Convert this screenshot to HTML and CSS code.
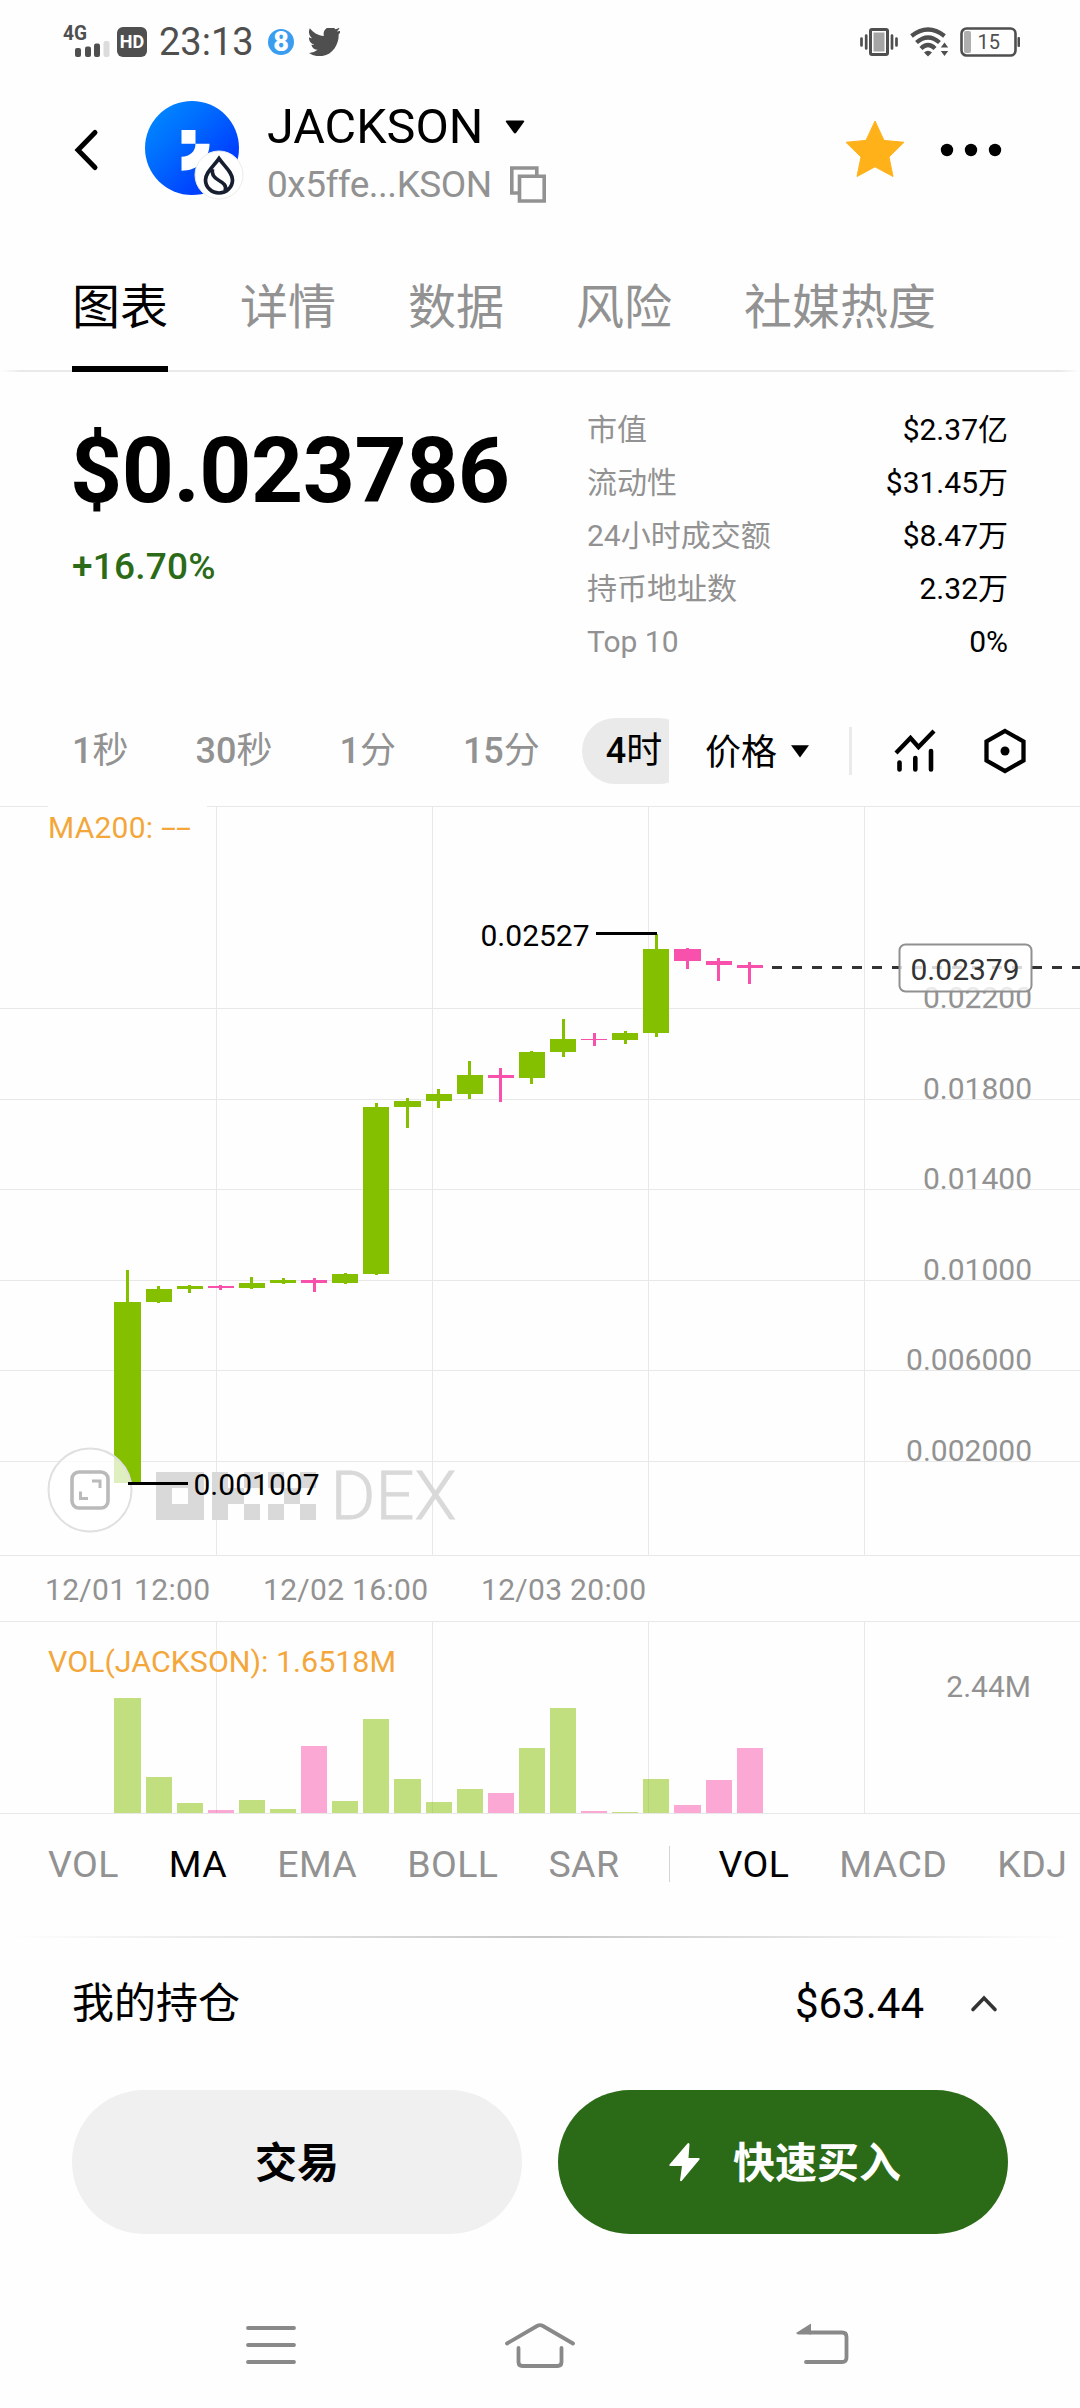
FILE: index.html
```html
<!DOCTYPE html>
<html lang="zh-CN">
<head>
<meta charset="utf-8">
<title>JACKSON</title>
<link rel="stylesheet" href="styles.css">
</head>
<body>
<div class="screen">
  <div class="status">
    <div class="status-side">
      <svg class="signal" width="50" height="36" viewBox="0 -2 50 36">
        <text class="signal-label" x="0" y="16" textLength="24" lengthAdjust="spacingAndGlyphs">4G</text>
        <g fill="#4f4f4f"><rect x="12" y="24" width="6" height="9" rx="2"/><rect x="22" y="22.500" width="6" height="10.500" rx="2"/><rect x="31" y="19.500" width="6" height="13.500" rx="2"/></g>
        <rect x="40.500" y="17" width="6" height="16" rx="2" fill="#dcdcdc"/>
      </svg>
      <span class="hd">HD</span>
      <span class="clock">23:13</span>
      <span class="eight">8</span>
      <svg class="bird" width="31" height="28" viewBox="1 3 22.500 18.600" preserveAspectRatio="none"><path fill="#4f4f4f" d="M23.950 4.570a10 10 0 0 1-2.820.770 4.960 4.960 0 0 0 2.160-2.720c-.950.550-2 .950-3.130 1.180a4.920 4.920 0 0 0-8.380 4.480C7.690 8.090 4.070 6.130 1.640 3.160a4.820 4.820 0 0 0-.670 2.480c0 1.710.870 3.210 2.190 4.100a4.900 4.900 0 0 1-2.230-.620v.060a4.920 4.920 0 0 0 3.950 4.830 5 5 0 0 1-2.210.080 4.940 4.940 0 0 0 4.600 3.420A9.870 9.870 0 0 1 1 19.540a13.990 13.990 0 0 0 7.550 2.210c9.050 0 14-7.500 14-13.980 0-.210 0-.420-.020-.630a9.940 9.940 0 0 0 2.460-2.550z"/></svg>
    </div>
    <div class="status-side">
      <svg class="vibrate" width="38" height="30" viewBox="0 0 38 30"><rect x="10.500" y="2.500" width="17" height="25" rx="1.500" fill="none" stroke="#4f4f4f" stroke-width="3"/><rect x="13.500" y="5.500" width="11" height="19" fill="#a5a5a5"/><path d="M1.500 11.500v7M6.200 8.500v13M32 8.500v13M36.500 11.500v7" stroke="#4f4f4f" stroke-width="2.700" stroke-linecap="round"/></svg>
      <svg class="wifi" width="40" height="30" viewBox="0 0 40 30"><g fill="none" stroke="#4f4f4f" stroke-width="4.300"><path d="M1.500 9Q18 -4 34.500 9"/><path d="M6.500 15.500Q18 5.500 29.500 15.500"/><path d="M11 21.500Q18 14.500 25 21.500"/></g><path d="M14 25.500Q18 22 22 25.500L18 29.500zM34.500 15.500l3.700 5h-7.400zM34.500 29l3.700-5h-7.400z" fill="#4f4f4f"/></svg>
      <svg class="battery" width="60" height="30" viewBox="0 0 60 30"><rect x="1.500" y="1.500" width="54" height="27" rx="5" fill="none" stroke="#4f4f4f" stroke-width="2.600"/><rect x="4" y="4" width="7" height="22" rx="2" fill="#afafaf"/><rect x="57.500" y="10" width="2.500" height="10" rx="1" fill="#4f4f4f"/><text class="battery-label" x="28.800" y="22" text-anchor="middle">15</text></svg>
    </div>
  </div>

  <header class="header">
    <svg class="back" width="26" height="44" viewBox="0 0 26 44"><path d="M22 4.500L5 22l17 17.500" fill="none" stroke="#000" stroke-width="5" stroke-linecap="round"/></svg>
    <svg class="avatar" width="100" height="104" viewBox="0 0 100 104">
      <defs><linearGradient id="coin" x1="0" y1="0" x2="1" y2="1"><stop offset="0" stop-color="#0090ff"/><stop offset=".35" stop-color="#006fff"/><stop offset=".75" stop-color="#0040ff"/><stop offset="1" stop-color="#0030ff"/></linearGradient></defs>
      <circle cx="48" cy="50" r="47" fill="url(#coin)"/>
      <path d="M37.500 32h14v13.700h14c0 16-12 27-28 27v-14c8.500 0 14-5.500 14-13h-14z" fill="#fff"/>
      <circle cx="75" cy="77" r="24" fill="#fff" stroke="#ececec"/>
      <path d="M75 60.500C70 68 61.500 74 61.500 82a13.500 13 0 0 0 27 0C88.500 74 80 68 75 60.500zM68.500 71c-1.500 6 2 9 6.500 11.500s8 5 6 10.500" fill="none" stroke="#161e30" stroke-width="3.700"/>
    </svg>
    <div class="token">
      <div class="token-name">JACKSON<svg width="20" height="14" viewBox="0 0 20 14"><path d="M2 .5h16q2 0 .8 1.800l-7.600 10.500q-1.200 1.400-2.400 0L1.200 2.300Q0 .5 2 .5z"/></svg></div>
      <div class="token-address"><span>0x5ffe...KSON</span><svg width="36" height="37" viewBox="0 0 36 37"><path d="M8 27H1.800V2h25v7M9.500 10.200H34.200V35H9.500z" fill="none" stroke="#929292" stroke-width="3.600"/></svg></div>
    </div>
    <svg class="star" width="60" height="60" viewBox="0 0 60 60"><path d="M30 3l9 19.400 20 1.900L44 39l4 19.500L30 48.800 12 58.500 16 39 1 24.300l20-1.900z" fill="#ffb11a" stroke="#ffb11a" stroke-linejoin="round"/></svg>
    <svg class="more" width="62" height="14" viewBox="0 0 62 14"><circle cx="7" cy="7" r="6.200"/><circle cx="31" cy="7" r="6.200"/><circle cx="55" cy="7" r="6.200"/></svg>
  </header>

  <nav class="tabs"><a class="tab active">图表</a><a class="tab">详情</a><a class="tab">数据</a><a class="tab">风险</a><a class="tab">社媒热度</a></nav>

  <section class="summary">
    <div class="quote"><div class="price">$0.023786</div><div class="change">+16.70%</div></div>
    <dl class="stats">
      <div><dt>市值</dt><dd>$2.37亿</dd></div>
      <div><dt>流动性</dt><dd>$31.45万</dd></div>
      <div><dt>24小时成交额</dt><dd>$8.47万</dd></div>
      <div><dt>持币地址数</dt><dd>2.32万</dd></div>
      <div><dt>Top 10</dt><dd>0%</dd></div>
    </dl>
  </section>

  <div class="toolbar">
    <div class="ranges"><span><b>1</b>秒</span><span><b>30</b>秒</span><span><b>1</b>分</span><span><b>15</b>分</span><span class="selected"><b>4</b>时</span></div>
    <div class="metric"><span>价格</span><svg width="18" height="13" viewBox="0 0 18 13"><path d="M0 .3h18L9 12.500z"/></svg></div>
    <i class="rule"></i>
    <svg class="tool-chart" width="42" height="46" viewBox="0 0 42 46"><path d="M2 25L16.500 10l8 9L40 3" fill="none" stroke="#000" stroke-width="4.300"/><path d="M5.500 34.500v7M21.300 30v11.500M37 23v18.500" stroke="#000" stroke-width="4.600" stroke-linecap="round"/></svg>
    <svg class="tool-hex" width="42" height="46" viewBox="0 0 42 46"><path d="M21 3l18.500 10.500v19L21 43 2.500 32.500v-19z" fill="none" stroke="#000" stroke-width="4.300"/><circle cx="21" cy="23" r="4.500"/></svg>
  </div>

  <svg class="chart" width="1080" height="1010" viewBox="0 806 1080 1010">
    <g class="grid">
      <path d="M0 806.500H48M207 806.500H1080M0 1008.500H1080M0 1099.500H1080M0 1189.500H1080M0 1280.500H1080M0 1370.500H1080M0 1461.500H1080M0 1555.500H1080M0 1621.500H1080M0 1813.500H1080"/>
      <path d="M216.500 806V1555M432.500 806V1555M648.500 806V1555M864.500 806V1555M216.500 1621V1813M432.500 1621V1813M648.500 1621V1813M864.500 1621V1813"/>
    </g>
    <g class="watermark">
      <path d="M156 1472h48v48h-48zM172 1488v16h16v-16z" fill-rule="evenodd"/>
      <path d="M212 1472h16v16h16v16h-16v16h-16zM244 1472h16v16h-16zM244 1504h16v16h-16z"/>
      <path d="M268 1472h16v16h-16zM300 1472h16v16h-16zM284 1488h16v16h-16zM268 1504h16v16h-16zM300 1504h16v16h-16z"/>
      <text x="330.500" y="1519" textLength="126" lengthAdjust="spacingAndGlyphs">DEX</text>
    </g>
    <g class="up">
      <path d="M114 1302h27v181h-27zM126 1270h3v32h-3z"/>
      <path d="M146 1289h26v13h-26zM157 1286h3v17h-3z"/>
      <path d="M177 1286h26v3h-26zM188 1285h3v8h-3z"/>
      <path d="M239 1283h26v5h-26zM250 1277h3v12h-3z"/>
      <path d="M270 1280h26v3h-26zM282 1278h3v6h-3z"/>
      <path d="M332 1274h26v9h-26zM344 1273h3v11h-3z"/>
      <path d="M363 1107h26v167h-26zM375 1103h3v172h-3z"/>
      <path d="M394 1101h27v6h-27zM406 1098h3v30h-3z"/>
      <path d="M426 1094h26v7h-26zM437 1089h3v19h-3z"/>
      <path d="M457 1075h26v19h-26zM468 1061h3v38h-3z"/>
      <path d="M519 1052h26v26h-26zM530 1051h3v33h-3z"/>
      <path d="M550 1039h26v13h-26zM562 1019h3v38h-3z"/>
      <path d="M612 1033h26v7h-26zM624 1031h3v13h-3z"/>
      <path d="M643 949h26v84h-26zM655 934h3v103h-3z"/>
    </g>
    <g class="down">
      <path d="M208 1286h26v2h-26zM219 1285h3v5h-3z"/>
      <path d="M301 1280h26v3h-26zM313 1278h3v14h-3z"/>
      <path d="M488 1075h26v3h-26zM499 1068h3v34h-3z"/>
      <path d="M581 1039h26v1h-26zM593 1033h3v13h-3z"/>
      <path d="M674 949h27v12h-27zM686 948h3v21h-3z"/>
      <path d="M706 961h26v4h-26zM717 958h3v23h-3z"/>
      <path d="M737 965h26v3h-26zM748 962h3v22h-3z"/>
    </g>
    <circle class="expand" cx="90" cy="1490" r="41.500"/>
    <rect class="expand-icon" x="72" y="1472" width="36" height="36" rx="7"/>
    <path class="expand-icon thin" d="M92 1481h8v7M88 1498.500h-7.500v-7"/>
    <path class="leader" d="M596 933.500h61M128 1483.500h60"/>
    <text class="note" x="480.500" y="946">0.02527</text>
    <text class="note" x="193.500" y="1495" textLength="126">0.001007</text>
    <g class="axis" text-anchor="end">
      <text x="1032" y="1008">0.02200</text><text x="1032" y="1099">0.01800</text><text x="1032" y="1189">0.01400</text><text x="1032" y="1280">0.01000</text><text x="1032" y="1370">0.006000</text><text x="1032" y="1461">0.002000</text>
      <text x="1031" y="1697">2.44M</text>
    </g>
    <path class="last" d="M772 967.500H1080"/>
    <rect class="last-box" x="899.500" y="944.500" width="132" height="47" rx="6"/>
    <text class="last-price" x="910.500" y="980">0.02379</text>
    <g class="axis"><text x="45" y="1600" textLength="165">12/01 12:00</text><text x="263" y="1600" textLength="165">12/02 16:00</text><text x="481" y="1600" textLength="165">12/03 20:00</text></g>
    <text class="legend" x="48" y="838" textLength="105">MA200:</text>
    <text class="legend" x="161" y="838" textLength="30" lengthAdjust="spacingAndGlyphs">--</text>
    <text class="legend" x="48" y="1672" textLength="348" lengthAdjust="spacingAndGlyphs">VOL(JACKSON): 1.6518M</text>
    <g class="volume up">
      <path d="M114 1698h27v115h-27zM146 1777h26v36h-26zM177 1803h26v10h-26zM239 1800h26v13h-26zM270 1809h26v4h-26zM332 1801h26v12h-26zM363 1719h26v94h-26zM394 1779h27v34h-27zM426 1802h26v11h-26zM457 1789h26v24h-26zM519 1748h26v65h-26zM550 1708h26v105h-26zM612 1812h26v1h-26zM643 1779h26v34h-26z"/>
    </g>
    <g class="volume down">
      <path d="M208 1810h26v3h-26zM301 1746h26v67h-26zM488 1793h26v20h-26zM581 1811h26v2h-26zM674 1805h27v8h-27zM706 1780h26v33h-26zM737 1748h26v65h-26z"/>
    </g>
  </svg>

  <div class="indicators"><span>VOL</span><span class="on">MA</span><span>EMA</span><span>BOLL</span><span>SAR</span><i></i><span class="on">VOL</span><span>MACD</span><span>KDJ</span></div>

  <div class="holding"><span class="holding-label">我的持仓</span><span class="holding-value">$63.44</span><svg width="28" height="20" viewBox="0 0 28 20"><path d="M3 16.500L14 5l11 11.500" fill="none" stroke="#333" stroke-width="3.600" stroke-linecap="round"/></svg></div>

  <div class="actions">
    <button class="btn trade">交易</button>
    <button class="btn buy"><svg width="31" height="39" viewBox="0 0 31 39"><path d="M18.500.5L.5 21.500q-.5 1.500 1 1.500H13l-2 14.500q1 1.500 2 0L30.500 16.500q.5-1.500-1-1.500H19.500L20.500 1q-1-1.500-2-.5z" fill="#fff"/></svg>快速买入</button>
  </div>

  <div class="sysnav">
    <svg width="52" height="46" viewBox="0 0 52 46"><path d="M3 5h46M3 22h46M3 39h46" stroke="#898989" stroke-width="3.800" stroke-linecap="round"/></svg>
    <svg class="home" width="72" height="46" viewBox="0 0 72 46"><path d="M3 20.500L33 3q3-1.600 6 0l30 17.500M14.500 25v14q0 4 4 4h35q4 0 4-4V25" fill="none" stroke="#898989" stroke-width="3.800" stroke-linecap="round"/></svg>
    <svg width="54" height="46" viewBox="0 0 54 46"><path d="M14 9.500h32q4.500 0 4.500 4.500v20.500q0 4.500-4.500 4.500H10" fill="none" stroke="#898989" stroke-width="3.800" stroke-linecap="round"/><path d="M0 10L15 .5v11H2z" fill="#898989"/></svg>
  </div>
</div>
</body>
</html>
```
FILE: styles.css
```css
* { box-sizing: border-box; }
body {
  margin: 0;
  background: #fefefe;
  color: #000;
  font-family: Roboto, "Noto Sans CJK SC", sans-serif;
}
.screen { width: 1080px; height: 2408px; display: flex; flex-direction: column; overflow: hidden; }
.screen > * { flex: none; }
svg { display: block; flex: none; }
text { font-family: Roboto, sans-serif; }

.status { height: 84px; padding: 0 60px 0 63px; display: flex; justify-content: space-between; align-items: center; color: #4f4f4f; }
.status-side { display: flex; align-items: center; }
.signal { margin-right: 4px; margin-top: -4px; overflow: visible; }
.signal-label { font-size: 21px; font-weight: 700; fill: #4f4f4f; }
.hd { width: 30px; height: 30px; border-radius: 6px; background: #4f4f4f; color: #fff; font-size: 18px; font-weight: 700; line-height: 30px; text-align: center; }
.clock { width: 94px; margin-left: 12px; font-size: 38px; line-height: 40px; white-space: nowrap; }
.eight { width: 26px; height: 26px; margin-left: 15px; border-radius: 50%; background: #3a9df0; color: #fff; font-size: 27px; font-weight: 900; line-height: 27px; text-align: center; }
.bird { margin-left: 15px; }
.wifi { margin-left: 12px; }
.battery { margin-left: 10px; }
.battery-label { font-size: 20px; fill: #4f4f4f; }

.header { height: 132px; padding: 0 78px 0 73px; display: flex; align-items: center; }
.avatar { margin-left: 45px; }
.token { margin-left: 23px; flex: 1; padding-top: 13px; }
.token-name { display: flex; align-items: center; gap: 22px; height: 56px; font-size: 48.500px; margin-top: -2px; }
.token-address { display: flex; align-items: center; gap: 20px; height: 56px; color: #929292; font-size: 37px; margin-top: 2px; }
.token-address span { width: 223px; letter-spacing: -.5px; white-space: nowrap; }
.star { margin-right: 35px; margin-bottom: 4px; }

.tabs { height: 156px; padding: 0 72px; display: flex; gap: 72px; background: linear-gradient(90deg, transparent, #e9e9e9 2%, #e9e9e9 98%, transparent) bottom / 100% 2px no-repeat; }
.tab { height: 156px; font-size: 48px; line-height: 183px; color: #929292; }
.tab.active { color: #000; border-bottom: 6px solid #000; }

.summary { height: 330px; padding: 0 72px; display: flex; justify-content: space-between; }
.quote { padding-top: 51px; }
.price { margin-left: -2px; font-size: 91px; font-weight: 700; line-height: 96px; letter-spacing: -.5px; }
.change { margin-top: 26px; font-size: 37px; font-weight: 500; line-height: 44px; color: #2b6b18; letter-spacing: .2px; }
.stats { width: 421px; margin: 0; padding-top: 31px; font-size: 30px; }
.stats div { height: 53px; display: flex; justify-content: space-between; line-height: 53px; }
.stats dt { color: #929292; }
.stats dd { margin: 0; }

.toolbar { height: 104px; padding-left: 72px; display: flex; align-items: center; font-size: 36px; line-height: 66px; padding-bottom: 6px; }
.toolbar b { font-weight: 500; }
.ranges { width: 597px; display: flex; gap: 67px; color: #929292; overflow: hidden; white-space: nowrap; }
.ranges .selected { flex: none; width: 110px; margin-left: -25px; padding-left: 24px; border-radius: 33px; background: #eaeaea; color: #000; }
.metric { margin-left: 36px; display: flex; align-items: center; gap: 14px; }
.metric span { padding-top: 3px; }
.rule { width: 3px; height: 48px; margin-left: 40px; background: #eaeaea; }
.tool-chart { margin-left: 42px; }
.tool-hex { margin-left: 48px; }

.grid { stroke: #e8e8e8; fill: none; }
.watermark { fill: #d9d9d9; }
.watermark text { font-size: 66px; font-weight: 300; stroke: #d9d9d9; stroke-width: .8px; }
.up { fill: #84bf00; }
.down { fill: #f851ab; }
.volume { opacity: .5; }
.expand { fill: #fff; fill-opacity: .75; stroke: #e0e0e0; stroke-width: 2; }
.expand-icon { fill: none; stroke: #bababa; stroke-width: 3.600; }
.expand-icon.thin { stroke-width: 3; }
.leader { stroke: #000; stroke-width: 3; }
.note { font-size: 30px; }
.axis { font-size: 30px; fill: #929292; }
.last { stroke: #333; stroke-width: 3; stroke-dasharray: 10 10; }
.last-box { fill: #fff; fill-opacity: .8; stroke: #909090; stroke-width: 2; }
.last-price { font-size: 30px; fill: #333; }
.legend { font-size: 30px; fill: #f3a73b; }

.indicators { height: 120px; padding: 0 0 24px 48px; display: flex; align-items: center; font-size: 37.500px; color: #929292; }
.indicators span { margin-right: 50px; letter-spacing: .4px; }
.indicators .on { color: #000; }
.indicators i { flex: none; width: 1px; height: 36px; margin-right: 48px; background: #d4d4d4; }

.holding { height: 154px; padding: 0 82px 20px 72px; display: flex; align-items: center; font-size: 42px; background: linear-gradient(90deg, transparent 1%, #c8c8c8 50%, transparent 99%) top / 100% 2px no-repeat; }
.holding-label { padding-bottom: 7px; }
.holding-value { margin-left: auto; margin-right: 46px; }

.actions { height: 144px; padding: 0 72px; display: flex; gap: 36px; }
.btn { flex: none; width: 450px; display: flex; align-items: center; justify-content: center; border: 0; border-radius: 72px; padding: 0 0 6px; font: 700 42px Roboto, "Noto Sans CJK SC", sans-serif; }
.trade { background: #f0f0f0; color: #000; }
.buy { padding-left: 4px; gap: 33px; background: #2b6b18; color: #fff; }
.buy svg { margin-top: 6px; }

.sysnav { padding: 89px 230px 0 245px; display: flex; justify-content: space-between; }
.home { margin-left: -13px; }
```
